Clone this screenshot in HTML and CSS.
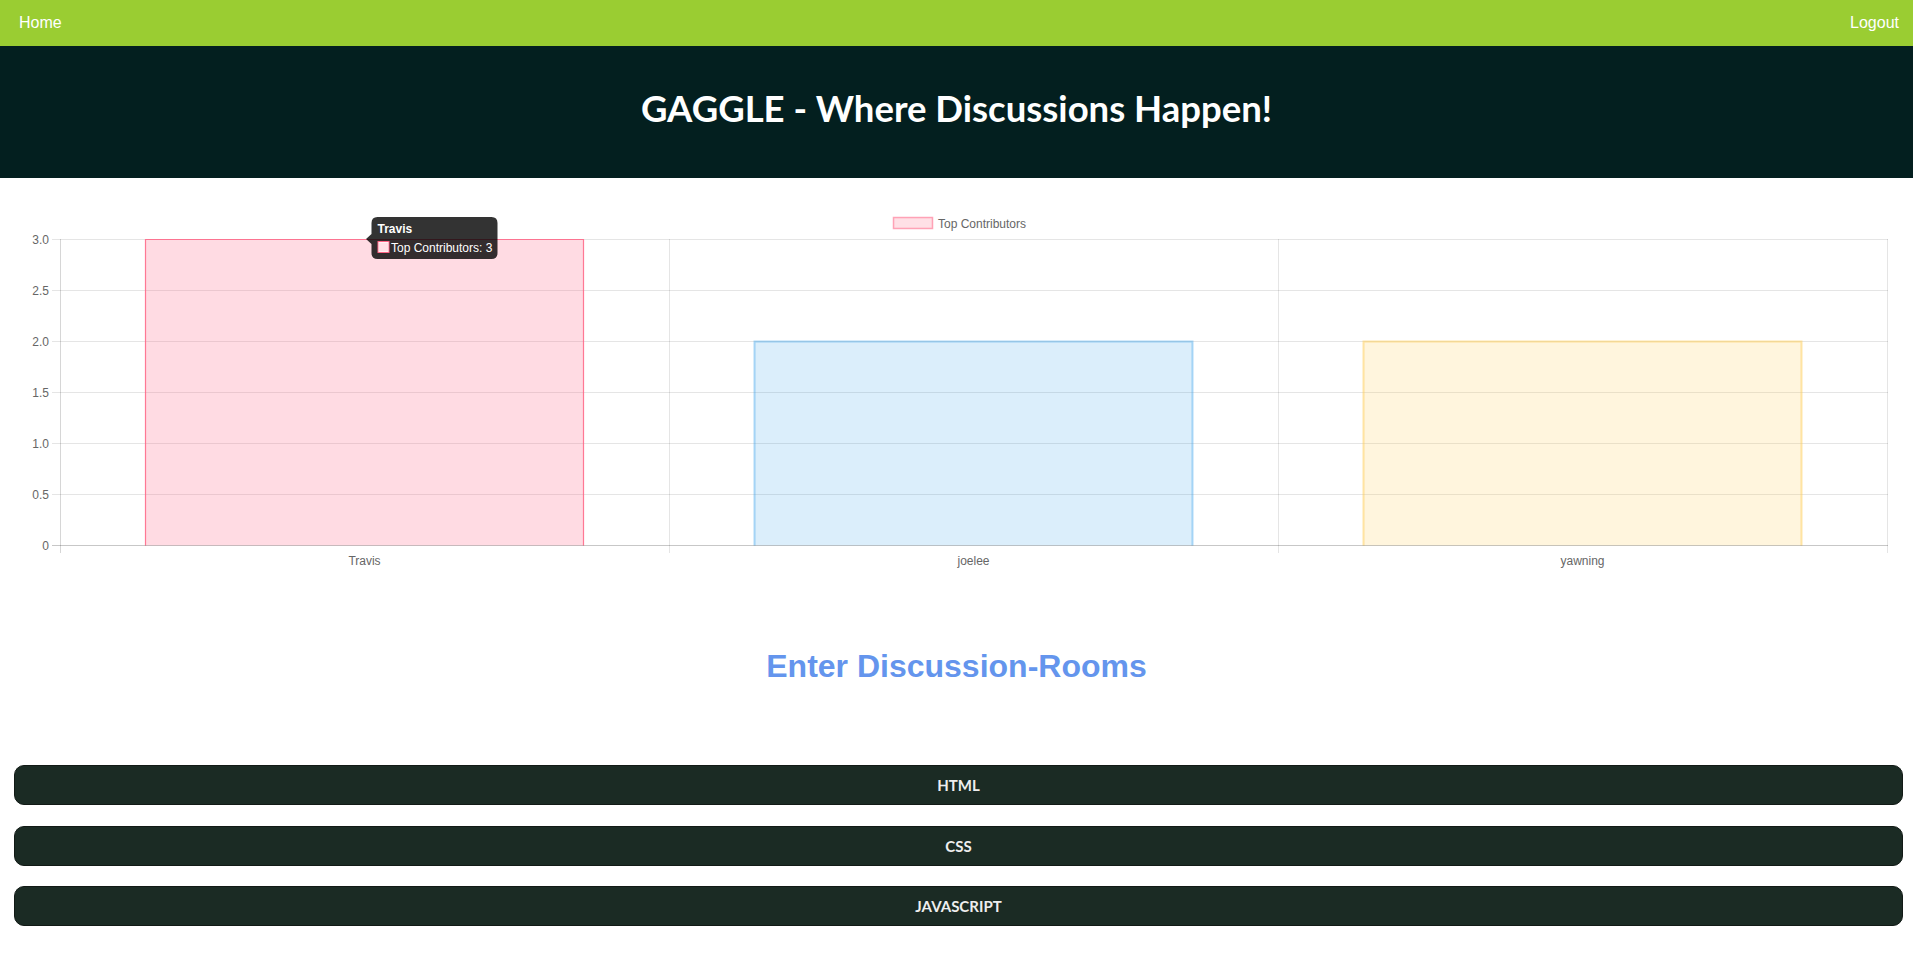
FILE: index.html
```html
<!DOCTYPE html>
<html lang="en">
<head>
<meta charset="utf-8">
<title>Gaggle</title>
<link rel="stylesheet" href="styles.css">
</head>
<body>
<nav class="topnav">
  <a class="nav-link" href="#">Home</a>
  <a class="nav-link" href="#">Logout</a>
</nav>
<header class="masthead">
  <h1 class="masthead-title">GAGGLE - Where Discussions Happen!</h1>
</header>
<section class="chart">
  <svg class="chart-svg" viewBox="0 0 1913 412" width="1913" height="412" xmlns="http://www.w3.org/2000/svg">
    <!-- legend -->
    <rect x="893.5" y="39.5" width="39" height="11" fill="rgba(255,99,132,0.2)" stroke="rgba(255,99,132,0.55)" stroke-width="1.5"/>
    <text class="tick" x="938" y="49.5">Top Contributors</text>

    <!-- horizontal grid -->
    <g stroke="rgba(0,0,0,0.1)" stroke-width="1">
      <line x1="52" y1="61.5" x2="1888" y2="61.5"/>
      <line x1="52" y1="112.5" x2="1888" y2="112.5"/>
      <line x1="52" y1="163.5" x2="1888" y2="163.5"/>
      <line x1="52" y1="214.5" x2="1888" y2="214.5"/>
      <line x1="52" y1="265.5" x2="1888" y2="265.5"/>
      <line x1="52" y1="316.5" x2="1888" y2="316.5"/>
      <line x1="669.5" y1="61" x2="669.5" y2="375"/>
      <line x1="1278.5" y1="61" x2="1278.5" y2="375"/>
      <line x1="1887.5" y1="61" x2="1887.5" y2="375"/>
    </g>
    <line x1="60.5" y1="61" x2="60.5" y2="375" stroke="rgba(0,0,0,0.16)" stroke-width="1"/>

    <!-- bars -->
    <rect x="145.5" y="61.5" width="438" height="306" fill="rgba(255,99,132,0.23)"/>
    <path d="M145.5 367.5 V61.5 H583.5 V367.5" fill="none" stroke="rgb(255,99,132)" stroke-width="1.2" stroke-opacity="0.85"/>
    <rect x="754.5" y="163.5" width="438" height="204" fill="rgba(54,162,235,0.18)"/>
    <path d="M754.5 367.5 V163.5 H1192.5 V367.5" fill="none" stroke="rgba(54,162,235,0.4)" stroke-width="2"/>
    <rect x="1363.5" y="163.5" width="438" height="204" fill="rgba(255,206,86,0.2)"/>
    <path d="M1363.5 367.5 V163.5 H1801.5 V367.5" fill="none" stroke="rgba(255,206,86,0.5)" stroke-width="2"/>

    <line x1="52" y1="367.5" x2="1888" y2="367.5" stroke="rgba(0,0,0,0.22)" stroke-width="1"/>

    <!-- y labels -->
    <g class="tick" text-anchor="end">
      <text x="49" y="65.5">3.0</text>
      <text x="49" y="116.5">2.5</text>
      <text x="49" y="167.5">2.0</text>
      <text x="49" y="218.5">1.5</text>
      <text x="49" y="269.5">1.0</text>
      <text x="49" y="320.5">0.5</text>
      <text x="49" y="371.5">0</text>
    </g>
    <!-- x labels -->
    <g class="tick" text-anchor="middle">
      <text x="364.5" y="387">Travis</text>
      <text x="973.5" y="387">joelee</text>
      <text x="1582.5" y="387">yawning</text>
    </g>

    <!-- tooltip -->
    <path d="M377.5 39 H491.5 Q497.5 39 497.5 45 V75 Q497.5 81 491.5 81 H377.5 Q371.5 81 371.5 75 V66 L366 61 L371.5 56 V45 Q371.5 39 377.5 39 Z" fill="rgba(0,0,0,0.8)"/>
    <text class="tip-title" x="377.5" y="55">Travis</text>
    <rect x="378" y="63.5" width="11" height="11" fill="#fff" stroke="rgb(255,99,132)" stroke-width="1"/>
    <rect x="379" y="64.5" width="9" height="9" fill="rgba(255,99,132,0.2)"/>
    <text class="tip-body" x="391" y="73.5">Top Contributors: 3</text>
  </svg>
</section>
<h2 class="rooms-title">Enter Discussion-Rooms</h2>
<div class="rooms">
  <button class="room-btn" type="button">HTML</button>
  <button class="room-btn" type="button">CSS</button>
  <button class="room-btn" type="button">JAVASCRIPT</button>
</div>
</body>
</html>
```

FILE: styles.css
```css
html, body {
  margin: 0;
  padding: 0;
  background: #ffffff;
}

body {
  font-family: "Liberation Sans", Arial, sans-serif;
}

.topnav {
  height: 46px;
  background: yellowgreen;
  display: flex;
  align-items: center;
  justify-content: space-between;
  padding: 0 14px 0 19px;
}

.nav-link {
  color: #ffffff;
  text-decoration: none;
  font-size: 16px;
}

.masthead {
  height: 132px;
  background: #031f1f;
  display: flex;
  align-items: center;
  justify-content: center;
}

.masthead-title {
  margin: 0 0 8px 0;
  color: #ffffff;
  font-family: Lato, "Open Sans", sans-serif;
  font-weight: 700;
  font-size: 36.5px;
}

.chart-svg {
  display: block;
}

.tick {
  font-family: "Liberation Sans", Arial, sans-serif;
  font-size: 12px;
  fill: #666666;
}

.tip-title {
  font-family: "Liberation Sans", Arial, sans-serif;
  font-size: 12px;
  font-weight: 700;
  fill: #ffffff;
}

.tip-body {
  font-family: "Liberation Sans", Arial, sans-serif;
  font-size: 12px;
  fill: #ffffff;
}

.rooms-title {
  margin: 58px 0 80px 0;
  text-align: center;
  color: cornflowerblue;
  font-size: 32px;
  line-height: 37px;
  font-weight: 700;
}

.rooms {
  display: flex;
  flex-direction: column;
  gap: 20.5px;
  padding: 0 10px 0 14px;
}

.room-btn {
  height: 40px;
  width: 100%;
  background: #1b2b24;
  border: 1px solid #121a16;
  border-radius: 10px;
  color: #eeeeee;
  font-family: Lato, "Open Sans", sans-serif;
  font-weight: 700;
  font-size: 15px;
  cursor: pointer;
}
```
